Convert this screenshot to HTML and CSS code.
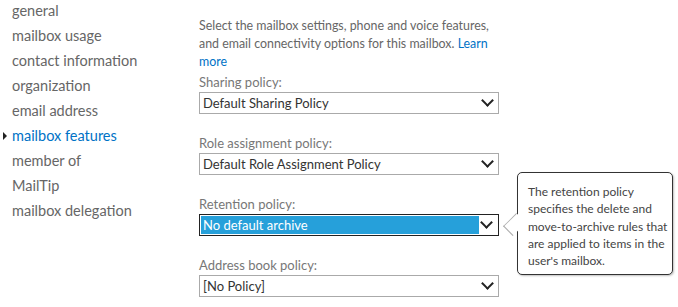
FILE: index.html
```html
<!DOCTYPE html>
<html lang="en">
<head>
    <meta charset="UTF-8">
    <title>Mailbox features</title>
    <link rel="stylesheet" href="styles.css">
</head>
<body>
    <div class="page">
        <ul class="nav">
            <li>general</li>
            <li>mailbox usage</li>
            <li>contact information</li>
            <li>organization</li>
            <li>email address</li>
            <li class="active">mailbox features</li>
            <li>member of</li>
            <li>MailTip</li>
            <li>mailbox delegation</li>
        </ul>

        <div class="content">
            <p class="intro">Select the mailbox settings, phone and voice features,<br>and email connectivity options for this mailbox. <a href="#">Learn<br>more</a></p>

            <div class="field">
                <label>Sharing policy:</label>
                <div class="select"><span>Default Sharing Policy</span><i class="arrow"></i></div>
            </div>
            <div class="field">
                <label>Role assignment policy:</label>
                <div class="select"><span>Default Role Assignment Policy</span><i class="arrow"></i></div>
            </div>
            <div class="field">
                <label>Retention policy:</label>
                <div class="select focused"><span>No default archive</span><i class="arrow"></i></div>
                <div class="tip">The retention policy<br>specifies the delete and<br>move-to-archive rules that<br>are applied to items in the<br>user's mailbox.</div>
            </div>
            <div class="field">
                <label>Address book policy:</label>
                <div class="select"><span>[No Policy]</span><i class="arrow"></i></div>
            </div>
        </div>
    </div>
</body>
</html>
```

FILE: styles.css
```css
body {
    margin: 0;
    font-family: Lato, "Open Sans", Arial, sans-serif;
    color: #666;
    background: #fff;
}
.page {
    display: flex;
}
.nav {
    list-style: none;
    margin: 0;
    padding: 0 0 0 12px;
    width: 187px;
    font-size: 14.5px;
}
.nav li {
    height: 25px;
    line-height: 22px;
    position: relative;
}
.nav li.active {
    color: #0072c6;
}
.nav li.active::before {
    content: "";
    position: absolute;
    left: -9px;
    top: 7px;
    border-left: 4px solid #222;
    border-top: 4px solid transparent;
    border-bottom: 4px solid transparent;
}
.content {
    padding-top: 17px;
    width: 300px;
}
.intro {
    margin: 0 0 2px;
    font-size: 12.4px;
    line-height: 18px;
    white-space: nowrap;
}
.intro a {
    color: #0072c6;
    text-decoration: none;
}
.field {
    position: relative;
    margin-bottom: 20px;
}
.field label {
    display: block;
    font-size: 13px;
    line-height: 19px;
    color: #777;
}
.select {
    display: flex;
    align-items: center;
    height: 20px;
    border: 1px solid #aaa;
    font-size: 13px;
    color: #333;
}
.select span {
    flex: 1;
    padding-left: 3px;
    line-height: 18px;
}
.select.focused {
    border-color: #222;
    padding: 1px;
    height: 18px;
}
.select.focused span {
    background: #26a0da;
    color: #fff;
    padding-left: 2px;
    line-height: 18px;
    height: 18px;
}
.arrow {
    width: 18px;
    height: 18px;
    position: relative;
}
.arrow::after {
    content: "";
    position: absolute;
    left: 3px;
    top: 2px;
    width: 7px;
    height: 7px;
    border-right: 2px solid #222;
    border-bottom: 2px solid #222;
    transform: rotate(45deg);
}
.tip {
    position: absolute;
    left: 318px;
    top: -23px;
    width: 138px;
    padding: 10px 6px 5px 10px;
    border: 1px solid #333;
    border-radius: 5px;
    background: #fff;
    font-size: 12px;
    line-height: 17.3px;
    color: #444;
    white-space: nowrap;
    box-shadow: 1px 1px 2px rgba(0, 0, 0, 0.25);
}
.tip::before {
    content: "";
    position: absolute;
    left: -12px;
    top: 43px;
    width: 16px;
    height: 16px;
    background: #fff;
    border-left: 1px solid #aaa;
    border-bottom: 1px solid #aaa;
    transform: rotate(45deg) scale(0.8, 1.1);
}
```
